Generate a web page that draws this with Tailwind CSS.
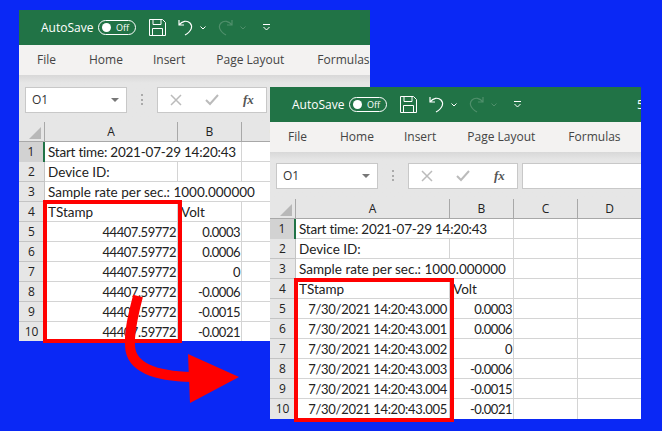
<!DOCTYPE html>
<html lang="en">
<head>
  <meta charset="UTF-8" />
  <title>Excel timestamps</title>
  <script src="https://cdn.jsdelivr.net/npm/@tailwindcss/browser@4"></script>
</head>
<body class="m-0 bg-[#0a28f5] font-['Open_Sans',sans-serif]">
<div class="relative w-[662px] h-[431px] overflow-hidden">

  <!-- first window -->
  <div class="absolute left-[19px] top-[10px] w-[351px] h-[331px] overflow-hidden bg-white flex flex-col">
    <div class="h-[35px] shrink-0 bg-[#217346] text-white flex items-center pl-[22px] text-[12px]">
      <span class="w-[57px]">AutoSave</span>
      <span class="w-[38px] h-[15px] rounded-full border border-white flex items-center pl-[3px] text-[9px]"><span class="w-[9px] h-[9px] rounded-full bg-white"></span><span class="ml-[5px]">Off</span></span>
      <svg class="ml-[13px]" width="17" height="17" viewBox="0 0 17 17" fill="none" stroke="#fff"><path d="M.5.5h13l3 3v13H.5zM4 .5v5h8v-5M3.500 16.500v-7h10v7"/></svg>
      <svg class="ml-[12px]" width="16" height="17" viewBox="0 0 16 17" fill="none" stroke="#fff" stroke-width="1.200"><path d="M1 1v5h5M1 6c3-4 8-5 11-2 3 3 2 8-5 12"/></svg>
      <svg class="ml-[6px]" width="6" height="4" viewBox="0 0 6 4" fill="none" stroke="#fff"><path d="M.5.500 3 3 5.500.5"/></svg>
      <svg class="ml-[12px]" width="15" height="17" viewBox="0 0 15 17" fill="none" stroke="#4f8f6b" stroke-width="1.200"><path d="M14 1v5H9M14 6C11 2 6 1 3 4 0 7 1 12 8 16"/></svg>
      <svg class="ml-[7px]" width="6" height="4" viewBox="0 0 6 4" fill="none" stroke="#4f8f6b"><path d="M.5.500 3 3 5.500.5"/></svg>
      <svg class="ml-[17px]" width="7" height="7" viewBox="0 0 7 7" fill="none" stroke="#fff"><path d="M0 .5h7M.5 3 3.500 6 6.500 3"/></svg>
    </div>
    <div class="h-[30px] shrink-0 bg-[#f3f2f1] flex items-center pl-[18px] gap-[31px] text-[12px] text-[#444] whitespace-nowrap">
      <span>File</span><span class="ml-[2px]">Home</span><span class="-ml-[1px]">Insert</span><span>Page Layout</span><span class="ml-[2px]">Formulas</span>
    </div>
    <div class="h-[47px] shrink-0 bg-[#e6e6e6] bg-linear-to-b from-[#d8d8d8] to-[#e6e6e6] to-[8px] flex items-start pt-[12px] pl-[6px]">
      <div class="w-[102px] h-[26px] bg-white border border-[#c8c8c8] flex items-center justify-between pl-[6px] pr-[7px] text-[12px] text-[#333]">O1<span class="w-0 h-0 border-x-[4px] border-x-transparent border-t-[4px] border-t-[#777]"></span></div>
      <div class="w-[30px] flex justify-center pt-[7px]"><span class="w-[2px] h-[11px] border-l-2 border-dotted border-[#aaa]"></span></div>
      <div class="w-[110px] h-[26px] bg-white border border-[#c8c8c8] flex items-center pl-[12px]">
        <svg width="12" height="12" viewBox="0 0 12 12" stroke="#bbb" stroke-width="1.500" fill="none"><path d="M1 1l10 10M11 1 1 11"/></svg>
        <svg class="ml-[23px]" width="14" height="12" viewBox="0 0 14 12" stroke="#bbb" stroke-width="2" fill="none"><path d="M1 6l4 4 8-9"/></svg>
        <span class="ml-[24px] font-['Liberation_Serif',serif] italic font-bold text-[13px] text-[#555]">fx</span>
      </div>
    </div>
    <div class="grid grid-cols-[26px_133px_64px_64px_64px] auto-rows-[20px] text-[13.5px] font-['Lato',sans-serif] text-[#222] whitespace-nowrap leading-[20px]">
      <div class="bg-[#e6e6e6] border-r border-b border-[#a8a8a8] relative"><span class="absolute right-[3px] bottom-[2px] w-0 h-0 border-l-[12px] border-l-transparent border-b-[12px] border-b-[#b8b8b8]"></span></div>
      <div class="bg-[#e6e6e6] border-r border-b border-[#a8a8a8] text-center font-['Open_Sans',sans-serif] text-[12px]">A</div>
      <div class="bg-[#e6e6e6] border-r border-b border-[#a8a8a8] text-center font-['Open_Sans',sans-serif] text-[12px]">B</div>
      <div class="bg-[#e6e6e6] border-r border-b border-[#a8a8a8] text-center font-['Open_Sans',sans-serif] text-[12px]">C</div>
      <div class="bg-[#e6e6e6] border-b border-[#a8a8a8] text-center font-['Open_Sans',sans-serif] text-[12px]">D</div>

      <div class="bg-[#d2d2d2] border-r-2 border-r-[#217346] text-center font-['Open_Sans',sans-serif] text-[12px]">1</div>
      <div class="col-span-2 border-r border-b border-[#d4d4d4] pl-[3px] tracking-[-0.22px]">Start time: 2021-07-29 14:20:43</div>
      <div class="border-r border-b border-[#d4d4d4]"></div><div class="border-b border-[#d4d4d4]"></div>

      <div class="bg-[#e6e6e6] border-r border-b border-[#c4c4c4] text-center font-['Open_Sans',sans-serif] text-[12px]">2</div>
      <div class="border-r border-b border-[#d4d4d4] pl-[3px]">Device ID:</div>
      <div class="border-r border-b border-[#d4d4d4]"></div><div class="border-r border-b border-[#d4d4d4]"></div><div class="border-b border-[#d4d4d4]"></div>

      <div class="bg-[#e6e6e6] border-r border-b border-[#c4c4c4] text-center font-['Open_Sans',sans-serif] text-[12px]">3</div>
      <div class="col-span-3 border-r border-b border-[#d4d4d4] pl-[3px]">Sample rate per sec.: 1000.000000</div>
      <div class="border-b border-[#d4d4d4]"></div>

      <div class="bg-[#e6e6e6] border-r border-b border-[#c4c4c4] text-center font-['Open_Sans',sans-serif] text-[12px]">4</div>
      <div class="border-r border-b border-[#d4d4d4] pl-[3px]">TStamp</div>
      <div class="border-r border-b border-[#d4d4d4] pl-[3px]">Volt</div>
      <div class="border-r border-b border-[#d4d4d4]"></div><div class="border-b border-[#d4d4d4]"></div>

      <div class="bg-[#e6e6e6] border-r border-b border-[#c4c4c4] text-center font-['Open_Sans',sans-serif] text-[12px]">5</div>
      <div class="border-r border-b border-[#d4d4d4] text-right pr-[1px] text-[13px] tracking-[-0.45px]">44407.59772</div>
      <div class="border-r border-b border-[#d4d4d4] text-right pr-[1px] text-[13px] tracking-[-0.5px]">0.0003</div>
      <div class="border-r border-b border-[#d4d4d4]"></div><div class="border-b border-[#d4d4d4]"></div>

      <div class="bg-[#e6e6e6] border-r border-b border-[#c4c4c4] text-center font-['Open_Sans',sans-serif] text-[12px]">6</div>
      <div class="border-r border-b border-[#d4d4d4] text-right pr-[1px] text-[13px] tracking-[-0.45px]">44407.59772</div>
      <div class="border-r border-b border-[#d4d4d4] text-right pr-[1px] text-[13px] tracking-[-0.5px]">0.0006</div>
      <div class="border-r border-b border-[#d4d4d4]"></div><div class="border-b border-[#d4d4d4]"></div>

      <div class="bg-[#e6e6e6] border-r border-b border-[#c4c4c4] text-center font-['Open_Sans',sans-serif] text-[12px]">7</div>
      <div class="border-r border-b border-[#d4d4d4] text-right pr-[1px] text-[13px] tracking-[-0.45px]">44407.59772</div>
      <div class="border-r border-b border-[#d4d4d4] text-right pr-[1px] text-[13px] tracking-[-0.5px]">0</div>
      <div class="border-r border-b border-[#d4d4d4]"></div><div class="border-b border-[#d4d4d4]"></div>

      <div class="bg-[#e6e6e6] border-r border-b border-[#c4c4c4] text-center font-['Open_Sans',sans-serif] text-[12px]">8</div>
      <div class="border-r border-b border-[#d4d4d4] text-right pr-[1px] text-[13px] tracking-[-0.45px]">44407.59772</div>
      <div class="border-r border-b border-[#d4d4d4] text-right pr-[1px] text-[13px] tracking-[-0.5px]">-0.0006</div>
      <div class="border-r border-b border-[#d4d4d4]"></div><div class="border-b border-[#d4d4d4]"></div>

      <div class="bg-[#e6e6e6] border-r border-b border-[#c4c4c4] text-center font-['Open_Sans',sans-serif] text-[12px]">9</div>
      <div class="border-r border-b border-[#d4d4d4] text-right pr-[1px] text-[13px] tracking-[-0.45px]">44407.59772</div>
      <div class="border-r border-b border-[#d4d4d4] text-right pr-[1px] text-[13px] tracking-[-0.5px]">-0.0015</div>
      <div class="border-r border-b border-[#d4d4d4]"></div><div class="border-b border-[#d4d4d4]"></div>

      <div class="bg-[#e6e6e6] border-r border-[#c4c4c4] text-center font-['Open_Sans',sans-serif] text-[12px]">10</div>
      <div class="border-r border-[#d4d4d4] text-right pr-[1px] text-[13px] tracking-[-0.45px]">44407.59772</div>
      <div class="border-r border-[#d4d4d4] text-right pr-[1px] text-[13px] tracking-[-0.5px]">-0.0021</div>
      <div class="border-r border-[#d4d4d4]"></div><div></div>
    </div>
  </div>
  <div class="absolute left-[43px] top-[200px] w-[139px] h-[143px] border-4 border-[#ff0000]"></div>

  <!-- second window -->
  <div class="absolute left-[270px] top-[87px] w-[371px] h-[332px] overflow-hidden bg-white flex flex-col">
    <div class="h-[35px] shrink-0 bg-[#217346] text-white flex items-center pl-[22px] text-[12px] relative">
      <span class="w-[57px]">AutoSave</span>
      <span class="w-[38px] h-[15px] rounded-full border border-white flex items-center pl-[3px] text-[9px]"><span class="w-[9px] h-[9px] rounded-full bg-white"></span><span class="ml-[5px]">Off</span></span>
      <svg class="ml-[13px]" width="17" height="17" viewBox="0 0 17 17" fill="none" stroke="#fff"><path d="M.5.5h13l3 3v13H.5zM4 .5v5h8v-5M3.500 16.500v-7h10v7"/></svg>
      <svg class="ml-[12px]" width="16" height="17" viewBox="0 0 16 17" fill="none" stroke="#fff" stroke-width="1.200"><path d="M1 1v5h5M1 6c3-4 8-5 11-2 3 3 2 8-5 12"/></svg>
      <svg class="ml-[6px]" width="6" height="4" viewBox="0 0 6 4" fill="none" stroke="#fff"><path d="M.5.500 3 3 5.500.5"/></svg>
      <svg class="ml-[12px]" width="15" height="17" viewBox="0 0 15 17" fill="none" stroke="#4f8f6b" stroke-width="1.200"><path d="M14 1v5H9M14 6C11 2 6 1 3 4 0 7 1 12 8 16"/></svg>
      <svg class="ml-[7px]" width="6" height="4" viewBox="0 0 6 4" fill="none" stroke="#4f8f6b"><path d="M.5.500 3 3 5.500.5"/></svg>
      <svg class="ml-[17px]" width="7" height="7" viewBox="0 0 7 7" fill="none" stroke="#fff"><path d="M0 .5h7M.5 3 3.500 6 6.500 3"/></svg>
      <span class="absolute left-[367px]">5</span>
    </div>
    <div class="h-[30px] shrink-0 bg-[#f3f2f1] flex items-center pl-[18px] gap-[31px] text-[12px] text-[#444] whitespace-nowrap">
      <span>File</span><span class="ml-[2px]">Home</span><span class="-ml-[1px]">Insert</span><span>Page Layout</span><span class="ml-[2px]">Formulas</span>
    </div>
    <div class="h-[47px] shrink-0 bg-[#e6e6e6] bg-linear-to-b from-[#d8d8d8] to-[#e6e6e6] to-[8px] flex items-start pt-[11px] pl-[6px]">
      <div class="w-[102px] h-[26px] bg-white border border-[#c8c8c8] flex items-center justify-between pl-[6px] pr-[7px] text-[12px] text-[#333]">O1<span class="w-0 h-0 border-x-[4px] border-x-transparent border-t-[4px] border-t-[#777]"></span></div>
      <div class="w-[30px] flex justify-center pt-[7px]"><span class="w-[2px] h-[11px] border-l-2 border-dotted border-[#aaa]"></span></div>
      <div class="w-[110px] h-[26px] bg-white border border-[#c8c8c8] flex items-center pl-[12px]">
        <svg width="12" height="12" viewBox="0 0 12 12" stroke="#bbb" stroke-width="1.500" fill="none"><path d="M1 1l10 10M11 1 1 11"/></svg>
        <svg class="ml-[23px]" width="14" height="12" viewBox="0 0 14 12" stroke="#bbb" stroke-width="2" fill="none"><path d="M1 6l4 4 8-9"/></svg>
        <span class="ml-[24px] font-['Liberation_Serif',serif] italic font-bold text-[13px] text-[#555]">fx</span>
      </div>
      <div class="ml-[4px] flex-1 h-[26px] bg-white border-y border-l border-[#c8c8c8]"></div>
    </div>
    <div class="grid grid-cols-[26px_154px_64px_64px_63px] auto-rows-[20px] text-[13.5px] font-['Lato',sans-serif] text-[#222] whitespace-nowrap leading-[20px]">
      <div class="bg-[#e6e6e6] border-r border-b border-[#a8a8a8] relative"><span class="absolute right-[3px] bottom-[2px] w-0 h-0 border-l-[12px] border-l-transparent border-b-[12px] border-b-[#b8b8b8]"></span></div>
      <div class="bg-[#e6e6e6] border-r border-b border-[#a8a8a8] text-center font-['Open_Sans',sans-serif] text-[12px]">A</div>
      <div class="bg-[#e6e6e6] border-r border-b border-[#a8a8a8] text-center font-['Open_Sans',sans-serif] text-[12px]">B</div>
      <div class="bg-[#e6e6e6] border-r border-b border-[#a8a8a8] text-center font-['Open_Sans',sans-serif] text-[12px]">C</div>
      <div class="bg-[#e6e6e6] border-b border-[#a8a8a8] text-center font-['Open_Sans',sans-serif] text-[12px]">D</div>

      <div class="bg-[#d2d2d2] border-r-2 border-r-[#217346] text-center font-['Open_Sans',sans-serif] text-[12px]">1</div>
      <div class="col-span-2 border-r border-b border-[#d4d4d4] pl-[3px] tracking-[-0.22px]">Start time: 2021-07-29 14:20:43</div>
      <div class="border-r border-b border-[#d4d4d4]"></div><div class="border-b border-[#d4d4d4]"></div>

      <div class="bg-[#e6e6e6] border-r border-b border-[#c4c4c4] text-center font-['Open_Sans',sans-serif] text-[12px]">2</div>
      <div class="border-r border-b border-[#d4d4d4] pl-[3px]">Device ID:</div>
      <div class="border-r border-b border-[#d4d4d4]"></div><div class="border-r border-b border-[#d4d4d4]"></div><div class="border-b border-[#d4d4d4]"></div>

      <div class="bg-[#e6e6e6] border-r border-b border-[#c4c4c4] text-center font-['Open_Sans',sans-serif] text-[12px]">3</div>
      <div class="col-span-2 border-r border-b border-[#d4d4d4] pl-[3px]">Sample rate per sec.: 1000.000000</div>
      <div class="border-r border-b border-[#d4d4d4]"></div><div class="border-b border-[#d4d4d4]"></div>

      <div class="bg-[#e6e6e6] border-r border-b border-[#c4c4c4] text-center font-['Open_Sans',sans-serif] text-[12px]">4</div>
      <div class="border-r border-b border-[#d4d4d4] pl-[3px]">TStamp</div>
      <div class="border-r border-b border-[#d4d4d4] pl-[3px]">Volt</div>
      <div class="border-r border-b border-[#d4d4d4]"></div><div class="border-b border-[#d4d4d4]"></div>

      <div class="bg-[#e6e6e6] border-r border-b border-[#c4c4c4] text-center font-['Open_Sans',sans-serif] text-[12px]">5</div>
      <div class="border-r border-b border-[#d4d4d4] text-right pr-[2px] text-[13px] tracking-[-0.3px]">7/30/2021 14:20:43.000</div>
      <div class="border-r border-b border-[#d4d4d4] text-right pr-[1px] text-[13px] tracking-[-0.5px]">0.0003</div>
      <div class="border-r border-b border-[#d4d4d4]"></div><div class="border-b border-[#d4d4d4]"></div>

      <div class="bg-[#e6e6e6] border-r border-b border-[#c4c4c4] text-center font-['Open_Sans',sans-serif] text-[12px]">6</div>
      <div class="border-r border-b border-[#d4d4d4] text-right pr-[2px] text-[13px] tracking-[-0.3px]">7/30/2021 14:20:43.001</div>
      <div class="border-r border-b border-[#d4d4d4] text-right pr-[1px] text-[13px] tracking-[-0.5px]">0.0006</div>
      <div class="border-r border-b border-[#d4d4d4]"></div><div class="border-b border-[#d4d4d4]"></div>

      <div class="bg-[#e6e6e6] border-r border-b border-[#c4c4c4] text-center font-['Open_Sans',sans-serif] text-[12px]">7</div>
      <div class="border-r border-b border-[#d4d4d4] text-right pr-[2px] text-[13px] tracking-[-0.3px]">7/30/2021 14:20:43.002</div>
      <div class="border-r border-b border-[#d4d4d4] text-right pr-[1px] text-[13px] tracking-[-0.5px]">0</div>
      <div class="border-r border-b border-[#d4d4d4]"></div><div class="border-b border-[#d4d4d4]"></div>

      <div class="bg-[#e6e6e6] border-r border-b border-[#c4c4c4] text-center font-['Open_Sans',sans-serif] text-[12px]">8</div>
      <div class="border-r border-b border-[#d4d4d4] text-right pr-[2px] text-[13px] tracking-[-0.3px]">7/30/2021 14:20:43.003</div>
      <div class="border-r border-b border-[#d4d4d4] text-right pr-[1px] text-[13px] tracking-[-0.5px]">-0.0006</div>
      <div class="border-r border-b border-[#d4d4d4]"></div><div class="border-b border-[#d4d4d4]"></div>

      <div class="bg-[#e6e6e6] border-r border-b border-[#c4c4c4] text-center font-['Open_Sans',sans-serif] text-[12px]">9</div>
      <div class="border-r border-b border-[#d4d4d4] text-right pr-[2px] text-[13px] tracking-[-0.3px]">7/30/2021 14:20:43.004</div>
      <div class="border-r border-b border-[#d4d4d4] text-right pr-[1px] text-[13px] tracking-[-0.5px]">-0.0015</div>
      <div class="border-r border-b border-[#d4d4d4]"></div><div class="border-b border-[#d4d4d4]"></div>

      <div class="bg-[#e6e6e6] border-r border-[#c4c4c4] text-center font-['Open_Sans',sans-serif] text-[12px]">10</div>
      <div class="border-r border-[#d4d4d4] text-right pr-[2px] text-[13px] tracking-[-0.3px]">7/30/2021 14:20:43.005</div>
      <div class="border-r border-[#d4d4d4] text-right pr-[1px] text-[13px] tracking-[-0.5px]">-0.0021</div>
      <div class="border-r border-[#d4d4d4]"></div><div></div>
    </div>
  </div>
  <div class="absolute left-[294px] top-[278px] w-[160px] h-[144px] border-4 border-[#ff0000]"></div>

  <!-- arrow between the two -->
  <svg class="absolute left-0 top-0" width="662" height="431" viewBox="0 0 662 431">
    <path d="M138 296C134 312 129 330 130 346C131 368 155 376 192 377" fill="none" stroke="#ff0000" stroke-width="10"/>
    <path d="M188 354 239 377 190 403z" fill="#ff0000"/>
  </svg>
</div>
</body>
</html>
